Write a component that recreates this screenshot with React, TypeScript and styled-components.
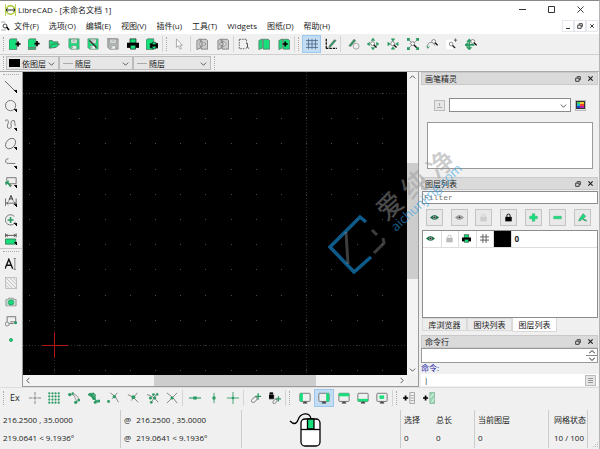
import React from "react";
import styled, { createGlobalStyle, css } from "styled-components";

const G = "#16df7b";
const D = "#2a9a62";
const K = "#111";

const GlobalStyle = createGlobalStyle`
  *, *::before, *::after { box-sizing: border-box; }
  html, body { margin: 0; }
  body, button, input, select, textarea {
    font-family: "Open Sans", "Noto Sans CJK SC", sans-serif;
    font-size: 8px;
    line-height: 12px;
    color: #222;
  }
  button, input, select, textarea { margin: 0; padding: 0; border: 0; border-radius: 0; background: none; outline: none; }
  svg { display: block; flex: none; }
`;

const Window = styled.div`
  position: relative;
  display: flex;
  flex-direction: column;
  min-height: 100vh;
  background: #f0f0f0;
  border-top: 1px solid #8b888c;
  border-right: 1px solid #b4b4b4;
`;

const TitleBar = styled.header`
  display: flex;
  align-items: center;
  height: 17px;
  padding: 0 5px;
  gap: 2px;
  background: #fff;
`;

const Title = styled.h1`
  flex: 1;
  margin: 0;
  font-size: 8px;
  font-weight: 400;
  line-height: 16px;
  white-space: nowrap;
`;

const CaptionButton = styled.button`
  display: grid;
  place-items: center;
  width: 27px;
  height: 16px;
`;

const MenuBar = styled.nav`
  display: flex;
  align-items: center;
  height: 16px;
  padding: 0 1px;
  background: #fff;
`;

const MenuList = styled.div`
  display: flex;
  flex: 1;
  gap: 10px;
  padding-left: 3px;
`;

const MenuButton = styled.button`
  white-space: nowrap;
`;

const ChildButton = styled.button`
  display: grid;
  place-items: center;
  width: 12px;
  height: 12px;
  border: 1px solid #e4e8ee;
`;

const Toolbar = styled.div`
  display: flex;
  align-items: center;
  height: 21px;
  padding-left: 3px;
  border-bottom: 1px solid #cfcfcf;
`;

const Handle = styled.span<{ $row?: boolean }>`
  flex: none;
  ${(p) =>
    p.$row
      ? css`width: 16px; height: 1px; border-top: 1px dotted #aaa; margin: 2px 0;`
      : css`width: 1px; height: 14px; border-left: 1px dotted #aaa;`}
`;

const Divider = styled.span`
  flex: none;
  width: 1px;
  height: 16px;
  background: #d4d4d4;
`;

const ToolGroup = styled.div<{ $w: number }>`
  display: flex;
  flex: none;
  width: ${(p) => p.$w}px;
`;

const ToolButton = styled.button<{ $on?: boolean }>`
  display: grid;
  place-items: center;
  flex: 1;
  min-width: 0;
  height: 18px;
  font-size: 9px;
  ${(p) => p.$on && css`background: #c2dcf3; box-shadow: inset 0 0 0 1px #9cc8ee;`}
`;

const PenBar = styled.div`
  display: flex;
  align-items: center;
  height: 17px;
  padding-left: 3px;
  gap: 2px;
  border-bottom: 1px solid #aaa;
`;

const Combo = styled.label<{ $w?: number; $plain?: boolean }>`
  display: flex;
  align-items: center;
  gap: 2px;
  ${(p) => (p.$w ? css`width: ${p.$w}px;` : css`flex: 1;`)}
  height: 14px;
  padding: 0 3px 0 2px;
  border: 1px solid ${(p) => (p.$plain ? "#8c8c8c" : "#bcbcbc")};
  background: ${(p) => (p.$plain ? "#fff" : "#e6e6e6")};
  margin-right: ${(p) => (p.$plain ? 0 : -2)}px;
`;

const Select = styled.select`
  flex: 1;
  min-width: 0;
  appearance: none;
  height: 12px;
  line-height: 11px;
`;

const BlackChip = styled.span`
  width: 11px;
  height: 8px;
  background: #000;
`;

const LineChip = styled.span`
  width: 10px;
  height: 1px;
  margin-left: 1px;
  background: #aaa;
`;

const Main = styled.main`
  display: flex;
  flex: 1;
  min-height: 0;
`;

const SideTools = styled.aside`
  display: flex;
  flex-direction: column;
  align-items: center;
  flex: none;
  width: 22px;
`;

const SideButton = styled.button`
  display: grid;
  place-items: center;
  width: 20px;
  height: 19px;
`;

const SideRule = styled.span`
  width: 22px;
  height: 1px;
  background: #c8c8c8;
`;

const Drawing = styled.section`
  display: grid;
  flex: 1;
  min-width: 0;
  grid-template: 1fr 11px / 1fr 11px;
  border: solid #999;
  border-width: 0 1px 1px 1px;
`;

const Canvas = styled.svg`
  width: 100%;
  height: 100%;
  min-height: 303px;
  background: #000;
`;

const Scroll = styled.div<{ $row?: boolean }>`
  display: flex;
  flex-direction: ${(p) => (p.$row ? "row" : "column")};
  background: #f3f3f3;
`;

const ScrollButton = styled.button`
  display: grid;
  place-items: center;
  width: 11px;
  height: 11px;
`;

const Space = styled.span<{ $grow: number }>`
  flex: ${(p) => p.$grow};
`;

const Thumb = styled.span<{ $grow: number }>`
  flex: ${(p) => p.$grow};
  background: #cdcdcd;
`;

const Gap = styled.span<{ $w: number }>`
  flex: none;
  width: ${(p) => p.$w}px;
`;

const Docks = styled.aside`
  display: flex;
  flex-direction: column;
  flex: none;
  width: 180px;
  padding: 0 1px 0 2px;
`;

const DockHead = styled.div`
  display: flex;
  align-items: center;
  flex: none;
  height: 13px;
  padding: 0 0 0 3px;
  border: 1px solid #c9c9c9;
  background: #dadada;
`;

const DockTitle = styled.h2`
  flex: 1;
  margin: 0;
  font-size: 8px;
  font-weight: 400;
  line-height: 11px;
`;

const DockButton = styled.button`
  display: grid;
  place-items: center;
  width: 13px;
  height: 11px;
`;

const PenPanel = styled.div`
  display: flex;
  flex-direction: column;
  gap: 10px;
  padding: 13px 5px 8px 6px;
`;

const PenRow = styled.div`
  display: flex;
  align-items: center;
  gap: 4px;
  padding: 0 7px;
`;

const TinyButton = styled.button`
  display: grid;
  place-items: center;
  width: 11px;
  height: 11px;
  border: 1px solid #bbb;
  background: #e6e6e6;
`;

const PenList = styled.div`
  height: 47px;
  border: 1px solid #999;
  background: #fff;
`;

const Filter = styled.input`
  flex: none;
  height: 13px;
  margin: 1px 0 5px 1px;
  padding: 0 1px;
  border: 1px solid #8c8c8c;
  background: #fff;
  font-family: "Liberation Mono", monospace;
  &::placeholder { color: #777; font-family: "Liberation Mono", monospace; opacity: 1; }
`;

const LayerButtons = styled.div`
  display: flex;
  justify-content: space-between;
  padding: 0 7px 0 5px;
`;

const LayerButton = styled.button`
  display: grid;
  place-items: center;
  width: 17px;
  height: 17px;
  border: 1px solid #c4c4c4;
  background: #e8e8e8;
`;

const LayerView = styled.div`
  flex: 1;
  min-height: 88px;
  margin: 4px 0 0 1px;
  border: 1px solid #8c8c8c;
  background: #fff;
`;

const LayerTable = styled.table`
  width: 100%;
  border-collapse: collapse;
  table-layout: fixed;
`;

const Cell = styled.td<{ $black?: boolean }>`
  height: 16px;
  padding: 0 3px;
  border-bottom: 1px solid #ddd;
  border-right: 1px solid #ddd;
  font-weight: 700;
  background: ${(p) => (p.$black ? "#000" : "#fff")};
  &:last-child { border-right: 0; }
`;

const Tabs = styled.div`
  display: flex;
  flex: none;
  height: 14px;
  margin-bottom: 3px;
  padding-left: 1px;
`;

const Tab = styled.button<{ $on?: boolean }>`
  width: 45px;
  border: 1px solid #d9d9d9;
  border-top-width: ${(p) => (p.$on ? 0 : 1)}px;
  background: ${(p) => (p.$on ? "#fff" : "#ececec")};
  margin-bottom: ${(p) => (p.$on ? 0 : 1)}px;
  line-height: 11px;
`;

const Log = styled.div`
  display: flex;
  justify-content: flex-end;
  flex: none;
  height: 15px;
  border: 1px solid #999;
  background: #fff;
`;

const Spin = styled.div`
  display: flex;
  flex-direction: column;
  width: 11px;
`;

const SpinButton = styled.button`
  display: grid;
  place-items: center;
  flex: 1;
  & + & { border-top: 1px solid #888; }
`;

const CommandLabel = styled.label`
  height: 11px;
  line-height: 9px;
  color: #2222a8;
`;

const CommandRow = styled.div`
  display: flex;
  align-items: center;
  height: 12px;
  margin-bottom: 1px;
  padding-right: 2px;
  background: #fff;
`;

const CommandInput = styled.input`
  flex: 1;
  min-width: 0;
  height: 12px;
  padding-left: 3px;
`;

const SnapBar = styled.div`
  display: flex;
  align-items: center;
  flex: none;
  height: 21px;
  padding-left: 3px;
  border-top: 1px solid #ddd;
`;

const Status = styled.footer`
  display: grid;
  grid-template-columns: 121px 121px 1fr 32px 42px 74px 39px 11px;
  flex: none;
  height: 41px;
  padding: 2px 0 1px;
`;

const StatusCell = styled.div<{ $line?: boolean; $pad?: number }>`
  display: flex;
  flex-direction: column;
  justify-content: center;
  gap: 6px;
  min-width: 0;
  padding-left: ${(p) => p.$pad ?? 3}px;
  white-space: pre;
  border-right: ${(p) => (p.$line ? "1px solid #ccc" : "0")};
`;

const Coordinate = styled.div`
  display: flex;
  gap: 5px;
  height: 12px;
`;

const MouseCell = styled(StatusCell)`
  align-items: center;
  padding: 0 32px 0 0;
`;

const Grip = styled.div`
  display: flex;
  align-items: flex-end;
  justify-content: flex-end;
`;

const Watermark = styled.svg`
  position: absolute;
  left: 320px;
  top: 109px;
  overflow: visible;
  pointer-events: none;
`;

function Ico({ children, s = 12 }: { children: React.ReactNode; s?: number }) {
  return (
    <svg width={s} height={s} viewBox="0 0 14 14" fill="none" stroke={K} strokeWidth="1" aria-hidden="true">
      {children}
    </svg>
  );
}

const plus = (x: number, y: number, r = 3) => <path d={`M${x - r} ${y}H${x + r}M${x} ${y - r}V${y + r}`} stroke="#000" strokeWidth="2" />;
const dot = (x: number, y: number, r = 1.3) => <circle cx={x} cy={y} r={r} fill={D} stroke="none" />;
const lens = (x: number, y: number) => (
  <g>
    <circle cx={x} cy={y} r="2.2" stroke="#777" fill="#fff" />
    <path d={`M${x + 1.6} ${y + 1.6}l3 3`} strokeWidth="1.6" />
  </g>
);
const floppy = (c: string) => (
  <g>
    <path d="M1 1H13V13H3L1 11Z" fill={c} stroke="#777" strokeWidth=".7" />
    <path d="M3.5 1.5h7v4.5h-7zM4 9h6v4H4z" fill="#e8f4ee" stroke="#777" strokeWidth=".5" />
    <path d="M5 3.5h4M5.5 10v2" stroke="#888" />
  </g>
);
const printer = (
  <g stroke="none">
    <path d="M3.5 1h7v5h-7z" fill={G} stroke="#222" strokeWidth=".8" />
    <path d="M0 5.5h14v6H0z" fill="#000" />
    <path d="M4 8.5h6v4.5H4z" fill={G} stroke="#222" strokeWidth=".8" />
  </g>
);
const lock = (c: string) => (
  <g>
    <path d="M4.5 6V4.2a2.5 2.5 0 0 1 5 0V6" stroke={c} strokeWidth="1.5" />
    <path d="M2 6h10v7H2z" fill={c} stroke="none" />
  </g>
);
const eye = (c: string) => (
  <g>
    <path d="M0 7Q7 -1 14 7Q7 14 0 7Z" fill={c} stroke="none" />
    <circle cx="7" cy="6.8" r="2.4" fill="#bbb" stroke="none" />
    <circle cx="7" cy="6.8" r="1.5" fill="#222" stroke="none" />
  </g>
);
const screen = (x: number, y: number, w: number, h: number) => (
  <g>
    <rect x="1" y="1.5" width="12" height="9.5" rx="1" stroke="#666" fill="#eef1f0" />
    <rect x={x} y={y} width={w} height={h} fill={G} stroke="none" />
    <path d="M4.5 12.7h5M7 11v2" strokeWidth="1.3" stroke="#333" />
  </g>
);
const pages = (c: string) => (
  <g>
    <path d="M1 3L5 1V12L1 13.5Z" fill={c} stroke="#555" strokeWidth=".7" />
    <path d="M6 1.5H12L13.5 3V13H6Z" fill={c} stroke="#555" strokeWidth=".7" />
  </g>
);
const pencil = <path d="M5 9L11 2L13 3L7 10L4.5 11Z" fill={D} stroke="#555" strokeWidth=".6" />;
const arrows = (s: string) => <path d={s} fill={D} stroke={D} strokeWidth=".6" />;
const chevron = (d: "up" | "down" | "left" | "right") => {
  const p = { up: "M1 5L4 2L7 5", down: "M1 3L4 6L7 3", left: "M5 1L2 4L5 7", right: "M3 1L6 4L3 7" }[d];
  return (
    <svg width="7" height="7" viewBox="0 0 8 8" fill="none" stroke="#555" strokeWidth="1.1" aria-hidden="true">
      <path d={p} />
    </svg>
  );
};
const restore = (
  <svg width="6" height="6" viewBox="0 0 7 7" fill="none" stroke="#222" aria-hidden="true">
    <path d="M2.5 2V.8H6.2V4.2H5M.8 2.5H4.8V6.2H.8Z" />
  </svg>
);
const cross = (s: number) => (
  <svg width={s} height={s} viewBox="0 0 8 8" fill="none" stroke="#222" strokeWidth={s > 6 ? 1 : 1.8} aria-hidden="true">
    <path d="M.5 .5L7.5 7.5M7.5 .5L.5 7.5" />
  </svg>
);

type Tool = { name: string; icon: React.ReactNode; on?: boolean };

const doc = <path d="M0 2.5L2 1H9V13.5H0Z" fill={G} stroke="#555" strokeWidth=".7" />;
const fileTools: Tool[] = [
  { name: "新建", icon: <g>{doc}{plus(10.5, 7)}</g> },
  { name: "从模板新建", icon: <g>{doc}<path d="M0 11.5h9" stroke="#777" strokeWidth="1.5" />{plus(10.5, 6.5)}</g> },
  { name: "打开", icon: <path d="M1.5 11.5V3H5L6 4.5H11.5V7M1.5 12L5 7H13.5L9.5 11Z" fill={G} stroke="#555" strokeWidth=".8" /> },
  { name: "保存", icon: floppy(G) },
  { name: "另存为", icon: <g>{floppy(G)}<path d="M3 3L11 11" stroke="#333" strokeWidth="1.6" /></g> },
  { name: "全部保存", icon: <g>{floppy("#b5b5b5")}<path d="M0 11V.5H11" stroke="#999" /></g> },
  { name: "打印", icon: printer },
  { name: "打印预览", icon: <g>{doc}<path d="M5 6.5h9v5H5z" fill="#000" /><path d="M7.5 5h4v2.5h-4zM7.5 9.5h4v3h-4z" fill={G} strokeWidth=".6" /></g> },
];
const cursorTool: Tool[] = [{ name: "选择", icon: <path d="M4 1V11L6.2 9L8.3 13L9.8 12.3L8 8.5H11Z" fill="#fff" stroke="#888" strokeWidth=".8" /> }];
const undoTools: Tool[] = [
  { name: "撤消", icon: <g>{pages("#ccc")}<path d="M3 7L7 3.5V10.5ZM6 5.8h5v2.4H6z" fill="#e8e8e8" stroke="#777" strokeWidth=".7" /></g> },
  { name: "重做", icon: <g>{pages("#ccc")}<path d="M11 7L7 3.5V10.5ZM3 5.8h4v2.4H3z" fill="#e8e8e8" stroke="#777" strokeWidth=".7" /></g> },
];
const copyTools: Tool[] = [
  { name: "剪切", icon: <g><path d="M1.5 1.5H10V7M1.5 1.5V12.5H8" strokeDasharray="2 1" stroke="#555" /><path d="M11 6v5M9 12.5l2-2 2 2" stroke="#333" /></g> },
  { name: "复制", icon: pages(G) },
  { name: "粘贴", icon: <g>{pages(G)}{plus(8.5, 7)}</g> },
];
const gridTools: Tool[] = [
  { name: "网格", on: true, icon: <path d="M0 3h14M0 7h14M0 11h14M3 1v12M7 1v12M11 1v12" stroke="#456080" strokeWidth=".9" /> },
  { name: "草稿", icon: <g><path d="M1.5 1V12M1 12H14" strokeDasharray="3 1" strokeWidth="1.5" />{pencil}</g> },
];
const zoomTools: Tool[] = [
  { name: "重绘", icon: <g><circle cx="9.5" cy="9.5" r="3.5" stroke="#999" /><path d="M1 9L7 1.5L9 3L3 10Z" fill={D} stroke="#666" strokeWidth=".6" /></g> },
  { name: "放大", icon: <g>{arrows("M7 0L9 3H5ZM7 14L5 11H9ZM0 7L3 5V9ZM14 7L11 9V5Z")}{lens(6.5, 6.5)}</g> },
  { name: "缩小", icon: <g>{arrows("M7 4L5 1H9ZM7 10L9 13H5ZM4 7L1 9V5ZM10 7L13 5V9Z")}{lens(6.5, 6.5)}</g> },
  { name: "自动缩放", icon: <g><path d="M2 2L12 12M12 2L2 12" stroke="#888" />{arrows("M0 0H3V3H0ZM11 0H14V3H11ZM0 11H3V14H0ZM11 11H14V14H11Z")}{lens(6.5, 6.5)}</g> },
  { name: "上一视图", icon: <g><path d="M2 12V9Q2 5 7 5Q10 5 10 9" stroke="#888" /><path d="M1 9l1 3 2-2" stroke={D} />{lens(9, 4)}</g> },
  { name: "窗口缩放", icon: <g><path d="M0 2H10V13H0Z" fill="#fff" stroke="none" />{lens(6, 7)}<path d="M9 2.5h4M11 .5v4" stroke="#555" /></g> },
  { name: "平移", icon: <g><path d="M5 3V13M0 8H11" stroke={D} strokeWidth="2" />{arrows("M5 1L8 4H2ZM5 14L2 11H8ZM0 8L3 5V11Z")}{lens(9, 4)}</g> },
];

const sideA: Tool[] = [
  { name: "直线", icon: <path d="M0 0L12 12" stroke="#555" /> },
  { name: "圆", icon: <circle cx="6.5" cy="6.5" r="6" stroke="#666" /> },
  { name: "曲线", icon: <path d="M0 3Q3 -2 4 4Q1 11 5 11Q8 11 7 5Q7 1 11 2L12 8" stroke="#666" /> },
  { name: "椭圆", icon: <ellipse cx="6.5" cy="6.5" rx="6.8" ry="5" transform="rotate(-48 6.5 6.5)" stroke="#666" /> },
  { name: "多段线", icon: <path d="M4 2Q0 2 1 6Q2 8 4 7.5H12" stroke="#666" /> },
  { name: "选取", icon: <g><path d="M2 2H13V9H6M2 2V6" stroke="#666" /><path d="M0 7L5 5L4 7L8 11L6 13L3 9L1 11Z" fill={D} stroke="none" /><path d="M6 10l2 2" stroke="#d66" /></g> },
  { name: "标注", icon: <g><path d="M.5 4V13M13 4V11M1 9.5H13M4 7.5L2 9.5L4 11.5M10 7.5L12 9.5L10 11.5" stroke="#555" /><path d="M4.5 6.5L7 .5L9.5 6.5M5.5 4.5H8.5" stroke="#222" /></g> },
  { name: "修改", icon: <g><path d="M11 3A6 6 0 1 0 12 9" stroke="#666" /><path d="M3 7H10M6.5 3.5V10.5" stroke={D} strokeWidth="2" /></g> },
  { name: "测量", icon: <g><path d="M.5 .5V5M13 .5V5M1 2.8H13M3 1L1.5 2.8L3 4.5M10.5 1L12 2.8L10.5 4.5" stroke="#444" /><path d="M.5 7H12.5V13H.5Z" fill={G} stroke="#357a55" /></g> },
];
const sideB: Tool[] = [
  { name: "文字", icon: <g><path d="M0 12.5L4.5 1.5L9 12.5M1.5 8.5H7.5" stroke="#111" strokeWidth="1.6" /><path d="M11.5 .5V13.5M10 .5H13M10 13.5H13" stroke="#777" /></g> },
  { name: "填充", icon: <path d="M.5 .5H13.5V13.5H.5ZM.5 5L9 13.5M.5 9L5 13.5M.5 .5L13.5 13.5M5 .5L13.5 9M9 .5L13.5 5" stroke="#aaa" strokeWidth=".8" /> },
  { name: "图像", icon: <g><path d="M1 4H4V2.5H10V4H13V11.5H1Z" fill="#bcd8ca" stroke="#888" strokeWidth=".8" /><circle cx="7" cy="7.5" r="3" fill={G} stroke={D} /></g> },
  { name: "图块", icon: <g><path d="M2.5 8V2H12.5V8H6" stroke="#666" /><circle cx="2.5" cy="10.5" r="2.3" stroke="#777" /><path d="M5 10H10" stroke="#666" />{dot(12.3, 9, 1.8)}</g> },
  { name: "点", icon: <circle cx="7" cy="7" r="1.8" fill={G} stroke={D} /> },
];

const snapA: Tool[] = [
  { name: "独占捕捉", icon: null },
  { name: "自由捕捉", icon: <g><path d="M0 7H14M7 0V14" stroke="#777" strokeDasharray="4 1" /></g> },
  { name: "网格捕捉", icon: <g>{[1.5, 5.2, 8.8, 12.5].map((y) => [1.5, 5.2, 8.8, 12.5].map((x) => <circle key={`${x}-${y}`} cx={x} cy={y} r="1.3" fill={D} stroke="none" />))}</g> },
  { name: "端点捕捉", icon: <g><path d="M3 3Q8 3 8 6Q8 8 11 11M6 2Q12 4 12.5 9" stroke="#888" />{dot(2, 3, 1.9)}{dot(5.5, 1.8, 1.4)}{dot(9, 12, 1.9)}{dot(12.5, 9.5, 1.6)}</g> },
  { name: "实体捕捉", icon: <g><path d="M1 3L12 12M3 1L7 9M9 3L6 8" stroke={D} strokeWidth="1.6" />{dot(2, 3, 1.8)}{dot(6, 2.5, 1.8)}{dot(7, 7, 2.2)}{dot(8.5, 12, 1.8)}{dot(12.5, 10.5, 1.8)}</g> },
  { name: "中心捕捉", icon: <g><path d="M4 1Q11 5 13.5 12M12 1L6 8" stroke="#777" />{dot(1.8, 11, 1.7)}{dot(8.5, 5.5, 1.9)}</g> },
  { name: "中点捕捉", icon: <g><path d="M1 3Q8 5 13 12M12 1L5 10" stroke="#777" />{dot(7.5, 6, 2.2)}</g> },
  { name: "距离捕捉", icon: <g><path d="M0 3Q8 5 13 12M12 1L5 12" stroke="#777" />{dot(7.5, 3, 1.6)}{dot(4, 7, 1.8)}{dot(9, 7, 1.8)}{dot(5, 12, 1.6)}{dot(12, 3, 1.4)}</g> },
  { name: "交点捕捉", icon: <g><path d="M1 1Q9 6 13 13M13 1L1 13" stroke="#777" />{dot(7, 7, 1.8)}</g> },
];
const snapB: Tool[] = [
  { name: "水平限制", icon: <g><path d="M0 7H14" stroke={D} strokeWidth="1.3" /><path d="M5 5.2H9V8.8H5Z" fill={D} stroke="none" /></g> },
  { name: "垂直限制", icon: <g><path d="M7 1V13" stroke={D} />{dot(7, 7, 2)}</g> },
  { name: "正交限制", icon: <g><path d="M0 7H14M7 0V14" stroke={D} />{dot(7, 7, 1.5)}</g> },
];
const snapC: Tool[] = [
  { name: "设置相对零点", icon: <g><path d="M6 5H13M9.5 1.5V9" stroke={D} strokeWidth="1.5" /><ellipse cx="5" cy="9" rx="4" ry="2.3" transform="rotate(-45 5 9)" stroke="#777" /></g> },
  { name: "锁定相对零点", icon: <g><path d="M0 3.5H5.5V8H0ZM1 3V.8H4.5V3" fill="#000" strokeWidth=".8" /><path d="M7.5 8H14M11 5V11" stroke={D} strokeWidth="1.5" /><ellipse cx="7" cy="11" rx="3" ry="1.8" transform="rotate(-45 7 11)" stroke="#777" /></g> },
];
const dockTools: Tool[] = [
  { name: "左侧面板", icon: screen(1, 1.5, 3.5, 9.5) },
  { name: "右侧面板", on: true, icon: screen(9.5, 1.5, 3.5, 9.5) },
  { name: "顶部面板", icon: screen(1, 1.5, 12, 3.5) },
  { name: "底部面板", icon: screen(1, 8, 12, 3) },
  { name: "浮动面板", icon: screen(4, 4, 5.5, 4) },
];
const customTools: Tool[] = [
  { name: "添加工具栏", icon: <g>{plus(3, 7)}<path d="M8 .5H13.5V13.5H8ZM9 4H12.5M9 7H12.5M9 10H12.5" stroke="#999" /></g> },
  { name: "添加菜单", icon: <g>{plus(3, 7)}<path d="M8 .5H13.5V13.5H8Z" fill="#9ad8b7" stroke="#8bb8a0" /><path d="M8 7L12 2M10 12L13 8" stroke="#fff" /></g> },
];

function Group({ items, width }: { items: Tool[]; width: number }) {
  return (
    <ToolGroup $w={width}>
      {items.map((t) => (
        <ToolButton key={t.name} type="button" aria-label={t.name} $on={t.on}>
          {t.icon ? <Ico>{t.icon}</Ico> : "Ex"}
        </ToolButton>
      ))}
    </ToolGroup>
  );
}

function DockHeader({ title }: { title: string }) {
  return (
    <DockHead>
      <DockTitle>{title}</DockTitle>
      <DockButton type="button" aria-label="浮动">{restore}</DockButton>
      <DockButton type="button" aria-label="关闭">{cross(5)}</DockButton>
    </DockHead>
  );
}

const columns = Array.from({ length: 16 }, (_, i) => Math.round(6 + i * 25.2));
const rows = Array.from({ length: 12 }, (_, i) => Math.round(21 + i * 25.2));

const menus = ["文件(F)", "选项(O)", "编辑(E)", "视图(V)", "插件(u)", "工具(T)", "Widgets", "图纸(D)", "帮助(H)"];

const layerActions: Tool[] = [
  { name: "显示全部", icon: eye("#177044") },
  { name: "隐藏全部", icon: eye("#999") },
  { name: "解锁全部", icon: lock("#ccc") },
  { name: "锁定全部", icon: lock("#000") },
  { name: "添加图层", icon: <path d="M5 1H9V5H13V9H9V13H5V9H1V5H5Z" fill={G} stroke={D} strokeWidth=".5" /> },
  { name: "删除图层", icon: <path d="M1 5H13V9H1Z" fill={G} stroke={D} strokeWidth=".5" /> },
  { name: "编辑图层", icon: <path d="M1 12L3 8L8 1L12 5L8 9L13 11V13L9 11L6 9L4 12Z" fill={G} stroke="#357a55" strokeWidth=".8" /> },
];

export default function App() {
  return (
    <Window>
      <GlobalStyle />
      <TitleBar>
        <svg width="11" height="12" viewBox="0 0 11 12" fill="none" aria-hidden="true">
          <circle cx="5.5" cy="6" r="4.3" stroke="#a8c832" strokeWidth="1.4" />
          <path d="M.5 0V12M10.5 0V12" stroke="#b9d35c" />
          <path d="M1 6H10M2.5 4.5L1 6L2.5 7.5M8.5 4.5L10 6L8.5 7.5" stroke="#222" />
        </svg>
        <Title>LibreCAD - [未命名文档 1]</Title>
        <CaptionButton type="button" aria-label="最小化">
          <svg width="7" height="7"><path d="M0 3.5H7" stroke="#333" /></svg>
        </CaptionButton>
        <CaptionButton type="button" aria-label="最大化">
          <svg width="7" height="7"><path d="M.5 .5H6.5V6.5H.5Z" fill="none" stroke="#333" /></svg>
        </CaptionButton>
        <CaptionButton type="button" aria-label="关闭">{cross(7)}</CaptionButton>
      </TitleBar>
      <MenuBar>
        <svg width="10" height="10" viewBox="0 0 10 10" fill="none" aria-hidden="true">
          <path d="M0 1H4M0 9H5" stroke="#aaa" />
          <circle cx="4" cy="5" r="2" stroke="#444" />
          <path d="M5.5 6L8 9" stroke="#000" strokeWidth="1.6" />
        </svg>
        <MenuList>
          {menus.map((m) => <MenuButton key={m} type="button">{m}</MenuButton>)}
        </MenuList>
        <ChildButton type="button" aria-label="最小化文档">
          <svg width="4" height="6"><path d="M0 5.5H4" stroke="#333" /></svg>
        </ChildButton>
        <ChildButton type="button" aria-label="还原文档">{restore}</ChildButton>
        <ChildButton type="button" aria-label="关闭文档">{cross(4)}</ChildButton>
      </MenuBar>
      <Toolbar>
        <Handle />
        <Gap $w={1} />
        <Group items={fileTools} width={157} />
        <Divider />
        <Gap $w={3} />
        <Handle />
        <Group items={cursorTool} width={23} />
        <Divider />
        <Gap $w={1} />
        <Group items={undoTools} width={41} />
        <Divider />
        <Group items={copyTools} width={60} />
        <Divider />
        <Gap $w={3} />
        <Handle />
        <Gap $w={3} />
        <Group items={gridTools} width={38} />
        <Divider />
        <Gap $w={3} />
        <Group items={zoomTools} width={137} />
      </Toolbar>
      <PenBar>
        <Handle />
        <Combo $w={53}>
          <BlackChip />
          <Select aria-label="颜色"><option>依图层</option></Select>
          {chevron("down")}
        </Combo>
        <Combo $w={74}>
          <LineChip />
          <Select aria-label="线宽"><option>随层</option></Select>
          {chevron("down")}
        </Combo>
        <Combo $w={78}>
          <LineChip />
          <Select aria-label="线型"><option>随层</option></Select>
          {chevron("down")}
        </Combo>
        <Gap $w={1} />
        <Handle />
      </PenBar>
      <Main>
        <SideTools>
          <Handle $row />
          {sideA.map((t) => (
            <SideButton key={t.name} type="button" aria-label={t.name}>
              <Ico>{t.icon}<path d="M11 11H14V14Z" fill="#000" stroke="#000" /></Ico>
            </SideButton>
          ))}
          <SideRule />
          <Handle $row />
          {sideB.map((t) => (
            <SideButton key={t.name} type="button" aria-label={t.name}><Ico>{t.icon}</Ico></SideButton>
          ))}
        </SideTools>
        <Drawing>
          <Canvas role="img" aria-label="绘图区">
            <g stroke="#2c2c2c" strokeDasharray="1 2" shapeRendering="crispEdges">
              <path d="M31.5 0V2000M283.5 0V2000M0 21.5H3000M0 273.5H3000" />
            </g>
            {rows.map((y) => columns.map((x) => <rect key={`${x}-${y}`} x={x} y={y} width="1" height="1" fill="#4a4a4a" />))}
            <path d="M19 273.5H45M31.5 260V286" stroke="#b01818" />
          </Canvas>
          <Scroll>
            <ScrollButton type="button" aria-label="向上">{chevron("up")}</ScrollButton>
            <Space $grow={80} /><Thumb $grow={117} /><Space $grow={85} />
            <ScrollButton type="button" aria-label="向下">{chevron("down")}</ScrollButton>
          </Scroll>
          <Scroll $row>
            <ScrollButton type="button" aria-label="向左">{chevron("left")}</ScrollButton>
            <Space $grow={120} /><Thumb $grow={163} /><Space $grow={80} />
            <ScrollButton type="button" aria-label="向右">{chevron("right")}</ScrollButton>
          </Scroll>
        </Drawing>
        <Docks>
          <DockHeader title="画笔精灵" />
          <PenPanel>
            <PenRow>
              <TinyButton type="button" aria-label="保存画笔">
                <svg width="5" height="5"><path d="M0 4.5H5M2.5 0V3" stroke="#aaa" /></svg>
              </TinyButton>
              <Combo $plain>
                <Select aria-label="画笔颜色" />
                {chevron("down")}
              </Combo>
              <TinyButton type="button" aria-label="选择颜色">
                <svg width="9" height="8" viewBox="0 0 9 8">
                  <path d="M0 0H9V8H0Z" fill="#333" />
                  <path d="M1 1H4V3H1Z" fill="#4c6" /><path d="M4 1H8V3H4Z" fill="#ec3" />
                  <path d="M1 3H4V5H1Z" fill="#2bc" /><path d="M4 3H8V5H4Z" fill="#e43" />
                  <path d="M1 5H4V7H1Z" fill="#24c" /><path d="M4 5H8V7H4Z" fill="#b2a" />
                </svg>
              </TinyButton>
            </PenRow>
            <PenList />
          </PenPanel>
          <DockHeader title="图层列表" />
          <Filter placeholder="Filter" aria-label="Filter" />
          <LayerButtons>
            {layerActions.map((t) => (
              <LayerButton key={t.name} type="button" aria-label={t.name}><Ico s={9}>{t.icon}</Ico></LayerButton>
            ))}
          </LayerButtons>
          <LayerView>
            <LayerTable>
              <colgroup>
                <col width="18" /><col width="17" /><col width="18" /><col width="17" /><col width="18" /><col />
              </colgroup>
              <tbody>
                <tr>
                  <Cell><Ico s={9}>{eye("#177044")}</Ico></Cell>
                  <Cell><Ico s={9}>{lock("#bbb")}</Ico></Cell>
                  <Cell><Ico s={9}>{printer}</Ico></Cell>
                  <Cell><Ico s={9}><path d="M0 4.5H14M0 9.5H14M4.5 0V14M9.5 0V14" stroke="#555" strokeWidth="1.4" /></Ico></Cell>
                  <Cell $black />
                  <Cell>0</Cell>
                </tr>
              </tbody>
            </LayerTable>
          </LayerView>
          <Tabs role="tablist">
            <Tab type="button" role="tab">库浏览器</Tab>
            <Tab type="button" role="tab">图块列表</Tab>
            <Tab type="button" role="tab" aria-selected $on>图层列表</Tab>
          </Tabs>
          <DockHeader title="命令行" />
          <Log>
            <Spin>
              <SpinButton type="button" aria-label="向上滚动">
                <svg width="6" height="4"><path d="M0 3.5L3 .5L6 3.5" fill="none" stroke="#222" /></svg>
              </SpinButton>
              <SpinButton type="button" aria-label="向下滚动">
                <svg width="6" height="4"><path d="M0 .5L3 3.5L6 .5" fill="none" stroke="#222" /></svg>
              </SpinButton>
            </Spin>
          </Log>
          <CommandLabel htmlFor="command">命令:</CommandLabel>
          <CommandRow>
            <CommandInput id="command" defaultValue="|" />
            <TinyButton type="button" aria-label="命令选项">
              <svg width="5" height="7"><path d="M0 1.5H5M0 3.5H5M0 5.5H5" stroke="#999" /></svg>
            </TinyButton>
          </CommandRow>
        </Docks>
      </Main>
      <SnapBar>
        <Handle />
        <Gap $w={1} />
        <Group items={snapA} width={177} />
        <Divider />
        <Gap $w={2} />
        <Group items={snapB} width={58} />
        <Divider />
        <Gap $w={2} />
        <Group items={snapC} width={39} />
        <Divider />
        <Gap $w={3} />
        <Handle />
        <Gap $w={5} />
        <Group items={dockTools} width={97} />
        <Divider />
        <Gap $w={3} />
        <Handle />
        <Gap $w={2} />
        <Group items={customTools} width={40} />
      </SnapBar>
      <Status>
        <StatusCell $line>
          <span>216.2500 , 35.0000</span>
          <span>219.0641 &lt; 9.1936°</span>
        </StatusCell>
        <StatusCell $line>
          <Coordinate><span>@</span><span>216.2500 , 35.0000</span></Coordinate>
          <Coordinate><span>@</span><span>219.0641 &lt; 9.1936°</span></Coordinate>
        </StatusCell>
        <MouseCell $line>
          <svg width="32" height="35" viewBox="0 0 32 35" fill="none" stroke="#000" strokeWidth="1.3" aria-hidden="true">
            <path d="M1 9C4 12 7 13 9 8C11 1 21-1 22 7" />
            <rect x="12" y="7" width="19" height="27" rx="4" fill="#fff" />
            <path d="M18.5 7H25V17H18.5Z" fill={G} />
            <path d="M12 17.5H31" />
          </svg>
        </MouseCell>
        <StatusCell><span>选择</span><span>0</span></StatusCell>
        <StatusCell $line><span>总长</span><span>0</span></StatusCell>
        <StatusCell $line><span>当前图层</span><span>0</span></StatusCell>
        <StatusCell $line $pad={5}><span>网格状态</span><span>10 / 100</span></StatusCell>
        <Grip>
          <svg width="7" height="7" fill="#bbb"><path d="M5 1h1v1H5zM3 3h1v1H3zM5 3h1v1H5zM1 5h1v1H1zM3 5h1v1H3zM5 5h1v1H5z" /></svg>
        </Grip>
      </Status>
      <Watermark width="180" height="180" viewBox="320 110 180 180" fill="none" aria-hidden="true">
        <path d="M366 222L360 217L330 247L354 272L371 257" stroke="#1279b8" strokeOpacity=".75" strokeWidth="3.5" />
        <path d="M346 232L348 264M372 230L377 235M383 238L384 243L374 253" stroke="#999" strokeOpacity=".4" strokeWidth="3" />
        <g fontFamily='"Noto Sans CJK SC", sans-serif' fontSize="26" fontWeight="500" fill="#999" fillOpacity=".5" textAnchor="middle">
          <text transform="translate(396 213) rotate(-41)">爱</text>
          <text transform="translate(421 192) rotate(-41)">纯</text>
          <text transform="translate(447 171) rotate(-41)">净</text>
        </g>
        <text transform="translate(396 232) rotate(-43)" fontFamily='"Open Sans", sans-serif' fontSize="13" fill="#2a9fe0" fillOpacity=".6">aichunjing.com</text>
      </Watermark>
    </Window>
  );
}
